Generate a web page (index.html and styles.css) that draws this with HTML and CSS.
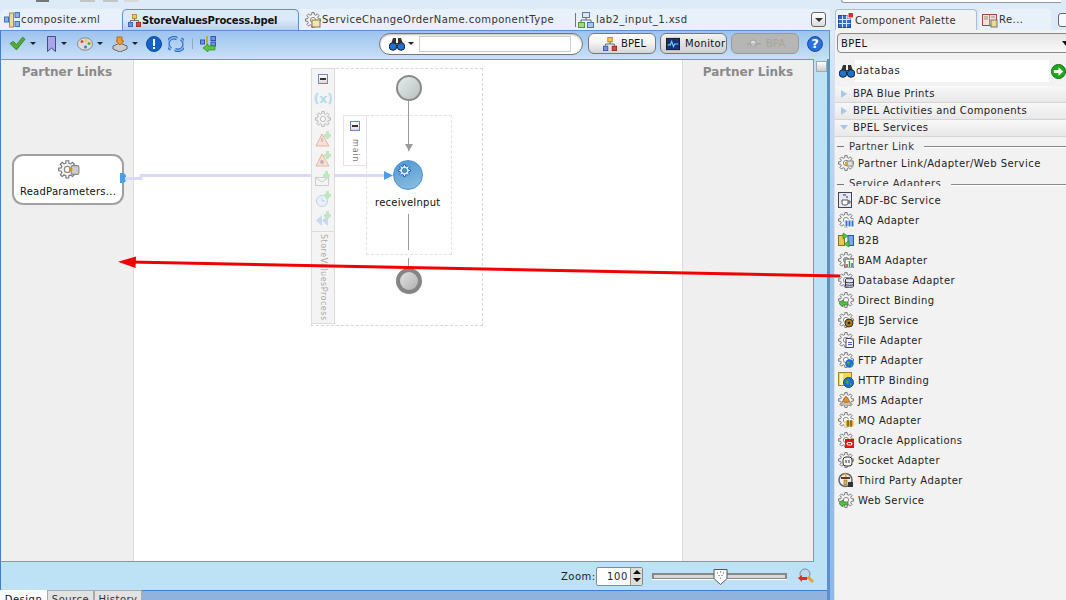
FILE: index.html
```html
<!DOCTYPE html>
<html lang="en">
<head>
<meta charset="utf-8">
<title>StoreValuesProcess.bpel</title>
<link rel="stylesheet" href="styles.css">
</head>
<body>
<svg class="defs" width="0" height="0">
  <defs>
    <symbol id="gear" viewBox="0 0 16 16">
      <path d="M6.67 2.66L6.83.59H9.17L9.33 2.66L10.83 3.29L12.41 1.93L14.07 3.59L12.71 5.17L13.34 6.67L15.41 6.83V9.17L13.34 9.33L12.71 10.83L14.07 12.41L12.41 14.07L10.83 12.71L9.33 13.34L9.17 15.41H6.83L6.67 13.34L5.17 12.71L3.59 14.07L1.93 12.41L3.29 10.83L2.66 9.33L.59 9.17V6.83L2.66 6.67L3.29 5.17L1.93 3.59L3.59 1.93L5.17 3.29Z" fill="#f4f4f4" stroke="#777" stroke-width="1"/>
      <circle cx="8" cy="8" r="2.6" fill="#fff" stroke="#888" stroke-width="1"/>
    </symbol>
    <symbol id="hier" viewBox="0 0 16 16">
      <rect x="5.5" y=".5" width="5" height="5" fill="#f2c84a" stroke="#a8821c"/>
      <path d="M8 5.5V8M3 10V8H13V10" fill="none" stroke="#555"/>
      <rect x=".5" y="10.5" width="5" height="5" fill="#6f95e6" stroke="#3357a8"/>
      <rect x="10.5" y="10.5" width="5" height="5" fill="#d9483b" stroke="#9c2318"/>
    </symbol>
    <symbol id="bino" viewBox="0 0 16 14">
      <path d="M4 1h3v5h2V1h3l2 6H2z" fill="#333"/>
      <circle cx="4" cy="9.5" r="3.8" fill="#1f6fd0" stroke="#222"/>
      <circle cx="12" cy="9.5" r="3.8" fill="#1f6fd0" stroke="#222"/>
    </symbol>
  </defs>
</svg>

<div class="app">
  <main class="editor">
    <div class="strip">
      <i class="nub nub-dark"></i><i class="nub nub-a"></i><i class="nub nub-b"></i><i class="nub nub-c"></i>
    </div>
    <div class="tabs">
      <div class="tab tab-first">
        <svg class="ico" viewBox="0 0 16 16"><rect x=".5" y="5" width="4" height="5" fill="#8ab0e8" stroke="#4672b8"/><rect x="5.5" y="1" width="4" height="14" fill="#e8dca0" stroke="#99904e"/><rect x="11" y=".5" width="4.5" height="5" fill="#8ab0e8" stroke="#4672b8"/><rect x="11" y="9.5" width="4.5" height="5" fill="#8ab0e8" stroke="#4672b8"/></svg>
        <span>composite.xml</span>
      </div>
      <div class="tab tab-active">
        <svg class="ico"><use href="#hier"/></svg>
        <span>StoreValuesProcess.bpel</span>
      </div>
      <div class="tab tab-third">
        <svg class="ico" viewBox="0 0 16 16"><use href="#gear"/><rect x="7" y="8" width="8" height="7" fill="#f0e4b0" stroke="#8a7a40"/></svg>
        <span>ServiceChangeOrderName.componentType</span>
      </div>
      <div class="tab tab-fourth">
        <svg class="ico" viewBox="0 0 16 16"><rect x="4.5" y=".5" width="7" height="5" fill="#dfe8f5" stroke="#5d79a8"/><path d="M8 5.5V8M3 10V8H13V10" fill="none" stroke="#667"/><rect x=".5" y="10.5" width="6" height="5" fill="#9fd88a" stroke="#4a9a3a"/><rect x="9.5" y="10.5" width="6" height="5" fill="#a8c8f0" stroke="#4672b8"/></svg>
        <span>lab2_input_1.xsd</span>
      </div>
      <button class="tab-menu"><i></i></button>
    </div>

    <div class="toolbar">
      <svg class="tool tool-check" viewBox="0 0 16 14"><path d="M1 7l3-2 3 3 6-7 2 2-8 10z" fill="#4eae35" stroke="#2f7a20" stroke-width=".8"/></svg><i class="caret"></i>
      <svg class="tool tool-mark" viewBox="0 0 10 16"><path d="M1 .5h8v15L5 12l-4 3.500z" fill="#a9a6e8" stroke="#4a4790"/></svg><i class="caret"></i>
      <svg class="tool tool-pal" viewBox="0 0 16 14"><ellipse cx="8" cy="7" rx="7.500" ry="6.200" fill="#ddd" stroke="#888"/><circle cx="5" cy="4.500" r="1.500" fill="#d9483b"/><circle cx="9" cy="3.500" r="1.500" fill="#f2c84a"/><circle cx="12" cy="6.500" r="1.500" fill="#4eae35"/><circle cx="8.500" cy="10" r="1.500" fill="#3b78d8"/></svg><i class="caret"></i>
      <svg class="tool tool-box" viewBox="0 0 16 16"><path d="M1 10l7-3 7 3v3l-7 3-7-3z" fill="#ccc" stroke="#666"/><path d="M5 1h5v4h2l-4 4-4-4h1z" fill="#f09a30" stroke="#b86a10"/></svg><i class="caret"></i>
      <svg class="tool tool-info" viewBox="0 0 16 16"><circle cx="8" cy="8" r="7.500" fill="#1462c8" stroke="#0c4a9c"/><rect x="7" y="3" width="2" height="7" fill="#fff"/><rect x="7" y="11" width="2" height="2" fill="#fff"/></svg>
      <svg class="tool tool-sync" viewBox="0 0 16 16"><path d="M3 13A6 6 0 0 1 9 2.500" fill="none" stroke="#2358b0" stroke-width="3.400"/><path d="M3 13A6 6 0 0 1 9 2.500" fill="none" stroke="#7fb0f0" stroke-width="1.800"/><path d="M13 3A6 6 0 0 1 7 13.500" fill="none" stroke="#2358b0" stroke-width="3.400"/><path d="M13 3A6 6 0 0 1 7 13.500" fill="none" stroke="#7fb0f0" stroke-width="1.800"/></svg>
      <i class="tool-sep"></i>
      <svg class="tool tool-flow" viewBox="0 0 16 16"><rect x=".5" y="4" width="4" height="4" fill="#6f95e6" stroke="#3357a8"/><rect x="11" y=".5" width="4.500" height="4" fill="#6f95e6" stroke="#3357a8"/><rect x="11" y="6" width="4.500" height="4" fill="#6f95e6" stroke="#3357a8"/><path d="M7 0v9" stroke="#c9a830" stroke-width="2"/><path d="M3 12l5-4v2h7v4H8v2z" fill="#58c840" stroke="#2f8a20" stroke-width=".7"/></svg>

      <div class="find">
        <svg class="find-ico"><use href="#bino"/></svg><i class="caret caret-find"></i>
        <div class="find-input"></div>
      </div>
      <button class="mode mode-bpel"><svg class="mode-ico"><use href="#hier"/></svg>BPEL</button>
      <button class="mode mode-on"><svg class="mode-ico" viewBox="0 0 16 16"><rect x=".5" y="1.500" width="15" height="13" fill="#14337e" stroke="#111"/><path d="M2 9h3l1.500-4 2 6 1.500-3h4" fill="none" stroke="#7fd0f8" stroke-width="1.300"/></svg>Monitor</button>
      <button class="mode mode-off"><svg class="mode-ico" viewBox="0 0 16 16"><circle cx="7" cy="7" r="3.500" fill="#ddd" stroke="#999"/><path d="M0 8h16" stroke="#999"/></svg>BPA</button>
      <svg class="help" viewBox="0 0 16 16"><circle cx="8" cy="8" r="7.400" fill="#2a70d8" stroke="#14479c"/><text x="8" y="12.300" text-anchor="middle" class="help-q">?</text></svg>
    </div>

    <div class="work">
      <div class="canvas">
        <aside class="partner partner-left"><h2>Partner Links</h2></aside>
        <section class="stage"></section>
        <aside class="partner partner-right"><h2>Partner Links</h2></aside>

        <div class="link-card">
          <svg class="link-gear" viewBox="0 0 20 20"><use href="#gear" width="17" height="17" x="0" y="1"/><rect x="12" y="6" width="7" height="8" rx="1.500" fill="#ccc" stroke="#888"/><rect x="10" y="8" width="3" height="3" fill="#e08a18"/></svg>
          <span>ReadParameters...</span>
        </div>
        <i class="link-port"></i>
        <svg class="wire" width="300" height="12" viewBox="0 0 300 12"><path d="M0 7.500H16V4.500H262" fill="none" stroke="#d9d9fb" stroke-width="3"/><path d="M259 0l9 4.500-9 4.500z" fill="#4b9ee6"/></svg>

        <div class="scope">
          <div class="scope-rail">
            <i class="mini"></i>
            <span class="rail-x">(x)</span>
            <svg class="rail-ico" viewBox="0 0 16 16"><use href="#gear" opacity=".5"/></svg>
            <svg class="rail-ico" viewBox="0 0 16 16"><path d="M7 3L14 15H1z" fill="#f7e0d4" stroke="#e0b8a8"/><path d="M7 7v4" stroke="#c99"/><path d="M11 0h3v3h2v3h-2v2h-3V6H9V3h2z" fill="#bfe8bf"/></svg>
            <svg class="rail-ico" viewBox="0 0 16 16"><path d="M7 3L14 15H1z" fill="#f7e0d4" stroke="#e0b8a8"/><circle cx="7" cy="11" r="2" fill="#c9b0b0"/><path d="M11 0h3v3h2v3h-2v2h-3V6H9V3h2z" fill="#bfe8bf"/></svg>
            <svg class="rail-ico" viewBox="0 0 16 16"><rect x=".5" y="6.500" width="13" height="8" fill="#f4f4f4" stroke="#ccc"/><path d="M1 7l6 4 6-4" fill="none" stroke="#ccc"/><path d="M10 0h3v3h2v3h-2v2h-3V6H8V3h2z" fill="#bfe8bf"/></svg>
            <svg class="rail-ico" viewBox="0 0 16 16"><circle cx="7" cy="10" r="5.500" fill="#e8f0fa" stroke="#bcd2ea"/><path d="M7 7v3h3" fill="none" stroke="#bcd2ea"/><path d="M11 0h3v3h2v3h-2v2h-3V6H9V3h2z" fill="#bfe8bf"/></svg>
            <svg class="rail-ico" viewBox="0 0 16 16"><path d="M7 4v11L1 9.500zM13 4v11L7 9.500z" fill="#c4daf2"/><path d="M11 0h3v3h2v3h-2v2h-3V6H9V3h2z" fill="#bfe8bf"/></svg>
            <span class="rail-name">StoreValuesProcess</span>
          </div>
        </div>

        <div class="seq">
          <div class="seq-tab"><i class="mini"></i><span class="seq-name">main</span></div>
        </div>

        <i class="node-start"></i>
        <i class="flow flow-a"></i>
        <i class="flow-head"></i>
        <div class="node-recv">
          <svg viewBox="0 0 16 16"><path d="M6.67 2.66L6.83.59H9.17L9.33 2.66L10.83 3.29L12.41 1.93L14.07 3.59L12.71 5.17L13.34 6.67L15.41 6.83V9.17L13.34 9.33L12.71 10.83L14.07 12.41L12.41 14.07L10.83 12.71L9.33 13.34L9.17 15.41H6.83L6.67 13.34L5.17 12.71L3.59 14.07L1.93 12.41L3.29 10.83L2.66 9.33L.59 9.17V6.83L2.66 6.67L3.29 5.17L1.93 3.59L3.59 1.93L5.17 3.29Z" fill="#e8f2fa" stroke="#1f62c0" stroke-width="1.200"/><circle cx="8" cy="8" r="2.600" fill="#4e96d0" stroke="#1f62c0"/></svg>
        </div>
        <span class="recv-label">receiveInput</span>
        <i class="flow flow-b"></i>
        <i class="flow flow-c"></i>
        <i class="node-end"></i>
      </div>
      <div class="gutter"><i class="gutter-box"></i></div>
    </div>

    <div class="zoombar">
      <label class="zoom-label">Zoom:</label>
      <div class="spin">
        <span class="spin-val">100</span>
        <div class="spin-btns"><i class="up"></i><i class="down"></i></div>
      </div>
      <div class="slider"><svg class="thumb" viewBox="0 0 15 16"><path d="M1 .5h13v9l-6.500 6-6.500-6z" fill="#fff" stroke="#555"/><path d="M4 4h1M7 3h1M10 4h1M5.500 6.500h1M8.500 6.500h1M7 9h1" stroke="#555"/></svg></div>
      <svg class="zoom-ico" viewBox="0 0 16 16"><circle cx="7" cy="6" r="5" fill="#bcd8f0" stroke="#7a8aa0"/><path d="M10 9l5 5" stroke="#e0a040" stroke-width="3"/><path d="M0 10l4-3v2h5v3H4v2z" fill="#d8301c"/></svg>
    </div>

    <div class="views">
      <span class="view view-on">Design</span>
      <span class="view">Source</span>
      <span class="view">History</span>
      <i class="views-fill"></i>
    </div>
  </main>

  <div class="split"></div>

  <aside class="side">
    <div class="strip strip-side"><i class="strip-box"></i></div>
    <div class="side-tabs">
      <div class="side-tab side-tab-on">
        <svg class="ico" viewBox="0 0 16 16"><rect x=".5" y="3.500" width="12" height="12" fill="#2d6fd0" stroke="#1a4a98"/><path d="M4.500 3.500v12M8.500 3.500v12M.5 7.500h12M.5 11.500h12" stroke="#d8e8fa"/><rect x="10" y=".5" width="5.500" height="5.500" fill="#e02a20" stroke="#fff"/></svg>
        <span>Component Palette</span>
      </div>
      <div class="side-tab side-tab-re">
        <svg class="ico" viewBox="0 0 16 16"><rect x=".5" y="2.500" width="14" height="11" fill="#f0e4dc" stroke="#a04838"/><path d="M7.500 2.500v11M2 5h4M2 7h4M9 5h4" stroke="#a08878"/><rect x="9" y="8" width="6" height="7" fill="#f0d890" stroke="#777"/></svg>
        <span>Re...</span>
      </div>
      <i class="side-min"></i>
    </div>
    <div class="pane">
      <div class="combo">BPEL<i class="combo-caret"></i></div>
      <div class="search">
        <svg class="search-ico"><use href="#bino"/></svg>
        <div class="search-input">databas</div>
        <svg class="go" viewBox="0 0 16 16"><circle cx="8" cy="8" r="7.500" fill="#1ea81e" stroke="#0d6a0d"/><path d="M3 6.500h5V3.500l5 4.500-5 4.500v-3H3z" fill="#fff"/></svg>
      </div>
      <div class="accordion"><i class="tri"></i>BPA Blue Prints</div>
      <div class="accordion"><i class="tri"></i>BPEL Activities and Components</div>
      <div class="accordion"><i class="tri tri-open"></i>BPEL Services</div>
      <div class="group"><i class="dash"></i><span>Partner Link</span><i class="rule"></i></div>
      <div class="row row-plink">
        <svg class="ico" viewBox="0 0 16 16"><use href="#gear"/><rect x="9" y="6" width="6" height="5" fill="#ddd" stroke="#888"/><rect x="7" y="7" width="3" height="3" fill="#e0a040"/></svg>
        <span>Partner Link/Adapter/Web Service</span>
      </div>
      <div class="group group-adapters"><i class="dash"></i><span>Service Adapters</span><i class="rule"></i></div>
      <div class="row"><svg class="ico" viewBox="0 0 16 16"><rect x=".5" y=".5" width="13" height="15" fill="#e4e8f4" stroke="#445"/><path d="M4 8h6v3a2 2 0 0 1-2 2H6a2 2 0 0 1-2-2zM10 9h2v2h-2" fill="#fff" stroke="#555"/><path d="M5 3h3M8 5h2" stroke="#335"/></svg><span>ADF-BC Service</span></div>
      <div class="row"><svg class="ico" viewBox="0 0 16 16"><use href="#gear"/><rect x="7" y="8" width="9" height="7" fill="#2f72d0" stroke="#fff"/><path d="M10 8v7M13 8v7" stroke="#fff"/></svg><span>AQ Adapter</span></div>
      <div class="row"><svg class="ico" viewBox="0 0 16 16"><rect x=".5" y="3.500" width="6" height="10" fill="#e8c850" stroke="#8a7020"/><rect x="10" y="3.500" width="5.500" height="10" fill="#78a8e8" stroke="#305898"/><path d="M5 1l5 3-5 3zM11 9l-5 3 5 3z" fill="#50c840" stroke="#2a8020" stroke-width=".6"/></svg><span>B2B</span></div>
      <div class="row"><svg class="ico" viewBox="0 0 16 16"><use href="#gear"/><rect x="7" y="7" width="9" height="9" fill="#fff" stroke="#555"/><path d="M9 15v-3" stroke="#d83020" stroke-width="1.500"/><path d="M11.500 15V9" stroke="#3a9a30" stroke-width="1.500"/><path d="M14 15v-4" stroke="#2f60c0" stroke-width="1.500"/></svg><span>BAM Adapter</span></div>
      <div class="row"><svg class="ico" viewBox="0 0 16 16"><use href="#gear"/><ellipse cx="11.500" cy="7.500" rx="4" ry="1.500" fill="#8a9fd0" stroke="#334"/><path d="M7.500 7.500v7c0 1 8 1 8 0v-7" fill="#dfe6f5" stroke="#334"/><path d="M7.500 10c1 1 7 1 8 0M7.500 12.500c1 1 7 1 8 0" fill="none" stroke="#334"/></svg><span>Database Adapter</span></div>
      <div class="row"><svg class="ico" viewBox="0 0 16 16"><use href="#gear"/><path d="M1 11l4-3v2h5v3H5v2z" fill="#50c840" stroke="#2a8020" stroke-width=".7"/></svg><span>Direct Binding</span></div>
      <div class="row"><svg class="ico" viewBox="0 0 16 16"><use href="#gear"/><circle cx="11" cy="11" r="4" fill="#b07a10" stroke="#333"/><circle cx="11" cy="11" r="1.300" fill="#222"/></svg><span>EJB Service</span></div>
      <div class="row"><svg class="ico" viewBox="0 0 16 16"><use href="#gear"/><path d="M8 6.500h5l2.500 2.500v6.500H8z" fill="#fff" stroke="#446"/><path d="M10 10.500h4M10 12.500h4" stroke="#3a6ac0"/></svg><span>File Adapter</span></div>
      <div class="row"><svg class="ico" viewBox="0 0 16 16"><use href="#gear"/><circle cx="11.500" cy="11.500" r="4.300" fill="#1f6fd0"/><path d="M9 9l3 1-1 3-2-1zM13 12l2 1-2 2z" fill="#4aa83a"/></svg><span>FTP Adapter</span></div>
      <div class="row"><svg class="ico" viewBox="0 0 16 16"><rect x=".5" y=".5" width="13" height="13" fill="#f6d850" stroke="#a08820"/><rect x="2" y="2" width="3" height="11" fill="#fff6c0"/><circle cx="10.500" cy="10.500" r="5" fill="#1f6fd0" stroke="#0c4890"/><path d="M8 8l3 1-1 3-2-1zM12 11l2 1-2 2z" fill="#4aa83a"/></svg><span>HTTP Binding</span></div>
      <div class="row"><svg class="ico" viewBox="0 0 16 16"><use href="#gear"/><path d="M8 4l4 6H4z" fill="#e8902a" stroke="#a85010" stroke-width=".6"/><path d="M3 11h10v2H3z" fill="#f0e8d8" stroke="#998"/></svg><span>JMS Adapter</span></div>
      <div class="row"><svg class="ico" viewBox="0 0 16 16"><use href="#gear"/><rect x="7" y="8" width="9" height="7" fill="#e8b020" stroke="#fff"/><path d="M10 8v7M13 8v7" stroke="#333"/></svg><span>MQ Adapter</span></div>
      <div class="row"><svg class="ico" viewBox="0 0 16 16"><use href="#gear"/><rect x="7" y="7" width="9" height="9" fill="#e81010"/><rect x="8.500" y="10" width="6" height="3.500" rx="1.700" fill="#fff"/><rect x="10" y="11" width="3" height="1.500" fill="#e81010"/></svg><span>Oracle Applications</span></div>
      <div class="row"><svg class="ico" viewBox="0 0 16 16"><use href="#gear"/><rect x="5" y="5" width="9" height="9" rx="3" fill="#f8f8f8" stroke="#333"/><path d="M8 8v3M11 8v3" stroke="#333"/></svg><span>Socket Adapter</span></div>
      <div class="row"><svg class="ico" viewBox="0 0 16 16"><circle cx="7.500" cy="8" r="6.500" fill="#eee" stroke="#666" stroke-width="1.500"/><path d="M3 5h9v2H3z" fill="#5a3a20"/><path d="M7 1l1 4" stroke="#e8a030" stroke-width="1.500"/><rect x="10" y="10" width="5" height="5" fill="#333"/><rect x="6" y="8" width="3" height="5" fill="#e0b030" stroke="#555" stroke-width=".5"/></svg><span>Third Party Adapter</span></div>
      <div class="row"><svg class="ico" viewBox="0 0 16 16"><use href="#gear"/><path d="M1 11l4-3v2h5v3H5v2z" fill="#50c840" stroke="#2a8020" stroke-width=".7"/></svg><span>Web Service</span></div>
    </div>
  </aside>
</div>

<svg class="annot" width="730" height="30" viewBox="0 0 730 30"><path d="M12 7L722 21" stroke="#f00000" stroke-width="3"/><path d="M0 6.800L18 1.500L17.500 13z" fill="#f00000"/></svg>
</body>
</html>
```
FILE: styles.css
```css
* { box-sizing: border-box; }
html, body { margin: 0; height: 100%; overflow: hidden; }
body {
  position: relative;
  width: 1066px;
  height: 600px;
  background: #dcebf7;
  font-family: "DejaVu Sans", sans-serif;
  font-size: 10px;
  color: #222;
}
i { display: block; font-style: normal; }
button { font: inherit; padding: 0; }
.defs { position: absolute; }
.app { display: flex; height: 600px; }

/* Editor column */
.editor { width: 830px; flex: none; display: flex; flex-direction: column; }
.strip { height: 9px; display: flex; align-items: flex-start; background: #dcebf7; flex: none; }
.nub { height: 2px; }
.nub-dark { width: 13px; margin-left: 36px; background: #777; }
.nub-a { width: 15px; margin-left: 31px; background: #c4c4c4; }
.nub-b { width: 15px; margin-left: 8px; background: #c4c4c4; }
.nub-c { width: 15px; margin-left: 6px; background: #dadada; }

.tabs { height: 21px; display: flex; align-items: flex-end; background: #dcebf7; flex: none; }
.tab { display: flex; align-items: center; height: 21px; letter-spacing: .45px; color: #333; white-space: nowrap; }
.ico { width: 16px; height: 16px; flex: none; }
.tab-first { width: 122px; padding-left: 4px; gap: 1px; background: #e8f1fa; border-top-left-radius: 6px; }
.tab-active {
  width: 177px;
  padding-left: 5px;
  gap: 1px;
  font-weight: 700;
  letter-spacing: -.2px;
  color: #111;
  background: linear-gradient(#dce9f8 0, #dce9f8 50%, #b6d0f0 100%);
  border: 1px solid #5b90d8;
  border-bottom: 0;
  border-radius: 5px 5px 0 0;
}
.tab-active .ico { width: 13px; height: 13px; }
.tab-third { width: 276px; padding-left: 6px; gap: 1px; background: #e8f1fa; }
.tab-fourth { flex: 1; gap: 2px; background: #e8f1fa; }
.tab-fourth::before { content: ""; width: 1px; height: 14px; background: #777; }
.tab-menu {
  width: 15px; height: 15px; margin: 0 4px 3px -19px;
  background: linear-gradient(#fff, #ddd); border: 1px solid #666; border-radius: 3px;
  display: flex; align-items: center; justify-content: center; position: relative;
}
.tab-menu i { width: 0; height: 0; border: 4px solid transparent; border-top: 4px solid #333; border-bottom: 0; }

.toolbar {
  height: 29px; flex: none; display: flex; align-items: center;
  background: linear-gradient(#9cc3ee, #c8e0f6);
  border-left: 1px solid #3f7fd0; border-right: 1px solid #5b90d8; border-top: 1px solid #5b90d8;
  padding: 0 0 3px 8px;
}
.tool { flex: none; }
.tool-check { width: 17px; height: 15px; }
.tool-mark { width: 11px; height: 16px; margin-left: 10px; }
.tool-pal { width: 16px; height: 14px; margin-left: 10px; }
.tool-box { width: 16px; height: 16px; margin-left: 9px; }
.tool-info { width: 16px; height: 16px; margin-left: 8px; }
.tool-sync { width: 16px; height: 16px; margin-left: 6px; }
.tool-sep { width: 1px; height: 11px; background: #8fa8c4; margin-left: 8px; }
.tool-flow { width: 16px; height: 16px; margin-left: 7px; }
.caret { width: 0; height: 0; margin-left: 4px; border: 3px solid transparent; border-top: 3px solid #222; border-bottom: 0; flex: none; }
.find {
  width: 204px; height: 22px; margin-left: 163px; flex: none;
  display: flex; align-items: center; padding-left: 9px;
  background: #fff; border: 1px solid #777; border-radius: 11px; box-shadow: inset 0 1px 2px #bbb;
}
.find-ico { width: 16px; height: 14px; }
.caret-find { margin-left: 3px; }
.find-input { width: 152px; height: 16px; margin-left: 5px; border: 1px solid #ccc; background: #fff; }
.mode {
  height: 21px; flex: none; display: flex; align-items: center; margin-left: 4px;
  letter-spacing: .1px; color: #111;
  background: linear-gradient(#fff 0, #f2f2f2 50%, #d4d4d4 100%);
  border: 1px solid #777; border-radius: 6px;
}
.mode-ico { width: 14px; height: 14px; flex: none; }
.mode-bpel { margin-left: 5px; width: 68px; padding-left: 14px; gap: 4px; }
.mode-on { width: 67px; padding-left: 4px; gap: 4px; letter-spacing: .35px; background: linear-gradient(#f2f2f2, #cfcfcf); }
.mode-on .mode-ico { width: 16px; height: 14px; }
.mode-off { width: 68px; padding-left: 15px; gap: 5px; color: #a6a690; background: #b6b6b6; border-color: #999; }
.help { width: 16px; height: 16px; margin-left: 8px; flex: none; }
.help-q { font: 700 13px "DejaVu Sans", sans-serif; fill: #fff; }

.work { height: 503px; flex: none; display: flex; background: #bde2f6; }
.canvas {
  position: relative; width: 814px; flex: none; display: flex;
  border: 1px solid #2db8e6; border-left-color: #3f7fd0; background: #fff;
}
.partner { width: 133px; flex: none; background: #efefef; text-align: center; }
.partner-left { border-right: 1px solid #dcdcdc; }
.partner-right { width: 131px; border-left: 1px solid #dcdcdc; }
.partner h2 { margin: 4px 0 0; font-size: 12px; line-height: 16px; font-weight: 700; color: #8a8a8a; }
.stage { flex: 1; background: #fff; }
.gutter { flex: 1; padding: 2px 0 0 2px; border-right: 3px solid #5b8fd0; }
.gutter-box { width: 11px; height: 11px; border: 1px solid #9ab; background: linear-gradient(#fff, #ccc); }

/* Diagram nodes, placed on the canvas */
.link-card {
  position: absolute; left: 11px; top: 94px; width: 112px; height: 51px;
  border: 2px solid #a0a0a0; border-radius: 11px; background: #fff;
  display: flex; flex-direction: column; align-items: center; padding-top: 3px;
  letter-spacing: .25px; color: #111;
}
.link-gear { width: 22px; height: 22px; margin-bottom: 5px; margin-left: 2px; }
.link-port { position: absolute; left: 119px; top: 113px; width: 6px; height: 10px; background: #4b9ee6; border-radius: 0 4px 4px 0; }
.wire { position: absolute; left: 124px; top: 111px; }
.scope { position: absolute; left: 310px; top: 8px; width: 172px; height: 258px; border: 1px dashed #d8d8d8; }
.scope-rail {
  width: 24px; height: 100%; margin: -1px 0 0 -1px; padding-top: 5px;
  background: #f4f4f4; border: 1px solid #dcdcdc;
  display: flex; flex-direction: column; align-items: center; gap: 4px;
}
.mini { width: 10px; height: 10px; flex: none; border: 1px solid #6a8ab0; background: linear-gradient(#fff, #ddd); position: relative; }
.mini::after { content: ""; position: absolute; left: 1px; right: 1px; top: 3px; height: 2px; background: #333; }
.rail-x { font-size: 13px; font-weight: 700; line-height: 16px; color: #b6dcec; margin-top: 3px; letter-spacing: -.5px; }
.rail-ico { width: 16px; height: 16px; flex: none; }
.rail-name {
  margin-top: 0; padding-top: 2px; width: 100%; flex: 1; border-top: 1px solid #dcdcdc;
  writing-mode: vertical-rl; display: flex; align-items: center;
  font-size: 8px; letter-spacing: .5px; color: #aaa; line-height: 22px;
}
.seq { position: absolute; left: 342px; top: 55px; width: 109px; height: 140px; }
.seq::after { content: ""; position: absolute; left: 23px; top: 0; right: 0; bottom: 0; border: 1px dashed #e2e2e2; }
.seq-tab {
  width: 24px; height: 51px; border: 1px solid #e4e4e4; background: #fff;
  display: flex; flex-direction: column; align-items: center; padding-top: 5px;
}
.seq-name { writing-mode: vertical-rl; font-size: 8px; letter-spacing: .9px; color: #777; margin-top: 8px; }
.node-start, .node-end { position: absolute; border-radius: 50%; }
.node-start { left: 395px; top: 15px; width: 26px; height: 26px; border: 2px solid #8a8a8a; background: linear-gradient(135deg, #e6ecec, #b8c0c0); }
.node-end { left: 395px; top: 208px; width: 26px; height: 26px; border: 4px solid #858585; background: linear-gradient(135deg, #e2e2e2, #b0b0b0); }
.flow { position: absolute; left: 407px; width: 1px; background: #9a9a9a; }
.flow-a { top: 41px; height: 50px; }
.flow-b { top: 154px; height: 36px; }
.flow-c { top: 198px; height: 10px; }
.flow-head { position: absolute; left: 404px; top: 84px; width: 0; height: 0; border: 4px solid transparent; border-top: 7px solid #9a9a9a; border-bottom: 0; }
.node-recv {
  position: absolute; left: 392px; top: 100px; width: 30px; height: 30px; border-radius: 50%;
  border: 1px solid #4a90d8; background: linear-gradient(160deg, #4e96d0, #8ec0e0); padding: 3px 0 0 4px;
}
.node-recv svg { width: 13px; height: 13px; display: block; }
.recv-label { position: absolute; left: 374px; top: 136px; letter-spacing: .25px; color: #111; line-height: 14px; }

.zoombar {
  height: 28px; flex: none; display: flex; align-items: center; padding-left: 560px;
  background: #bde2f6; border-left: 1px solid #3f7fd0; border-right: 3px solid #5b8fd0;
}
.zoom-label { letter-spacing: .5px; color: #222; width: 35px; }
.spin { display: flex; width: 47px; height: 19px; border: 1px solid #888; background: #fff; border-radius: 2px; }
.spin-val { flex: 1; text-align: right; padding-right: 2px; line-height: 17px; letter-spacing: .6px; color: #222; }
.spin-btns { width: 12px; display: flex; flex-direction: column; background: #ddd; border-left: 1px solid #999; align-items: center; justify-content: space-around; }
.up { width: 0; height: 0; border: 4px solid transparent; border-bottom: 4px solid #111; border-top: 0; }
.down { width: 0; height: 0; border: 4px solid transparent; border-top: 4px solid #111; border-bottom: 0; }
.slider { position: relative; width: 135px; height: 6px; margin-left: 9px; border: 1px solid #888; border-width: 2px 2px 1px; background: #d8d8d8; box-shadow: 0 1px 0 #fff; }
.thumb { position: absolute; left: 59px; top: -6px; width: 15px; height: 16px; }
.zoom-ico { width: 16px; height: 16px; margin-left: 11px; flex: none; }

.views { height: 9px; flex: 1; display: flex; overflow: hidden; background: #bde2f6; border-right: 3px solid #5b8fd0; }
.view { width: 47px; height: 18px; line-height: 13px; padding-top: 2px; text-align: center; background: #e2e2e2; border: 1px solid #aaa; border-bottom: 0; letter-spacing: .5px; color: #333; }
.view:nth-child(3) { width: 48px; }
.view-on { background: #fff; border: 0; padding-top: 3px; color: #111; }
.views-fill { flex: 1; background: #8fb3dd; border-top: 1px solid #3f7fd0; }

.split { width: 4px; flex: none; background: linear-gradient(#dcebf7 5%, #a8c8ea 40%, #8fb8e6); }

/* Palette */
.side { width: 232px; flex: none; display: flex; flex-direction: column; overflow: hidden; }
.strip-side { width: 232px; }
.strip-box { width: 220px; height: 3px; margin-left: 7px; border: 1px solid #999; border-top: 0; border-right: 0; border-radius: 0 0 0 4px; background: #fff; }
.side-tabs { height: 21px; display: flex; align-items: stretch; flex: none; }
.side-tab { display: flex; flex: none; align-items: center; gap: 1px; letter-spacing: .45px; color: #333; border-radius: 4px 4px 0 0; }
.side-tab-re { width: 72px; padding-left: 3px; background: #e8f1fa; margin-left: 2px; }
.side-tab-on { width: 142px; padding-left: 2px; letter-spacing: .3px; background: #f2f2f2; border: 1px solid #a8bcd4; border-bottom: 0; margin-left: 1px; }
.side-min { flex: none; width: 14px; height: 14px; margin: 4px 0 0 7px; border: 1px solid #666; border-radius: 3px; background: #f4f8fc; }
.pane { flex: 1; background: #f2f2f2; padding-top: 3px; border-left: 1px solid #dde; }
.combo {
  width: 240px; height: 20px; margin-left: 2px; padding-left: 3px; line-height: 20px;
  border: 1px solid #888; border-radius: 4px; background: linear-gradient(#e6e6e6, #f8f8f8);
  position: relative; color: #111; letter-spacing: .4px;
}
.combo-caret { position: absolute; left: 224px; top: 7px; width: 0; height: 0; border: 4px solid transparent; border-top: 5px solid #111; border-bottom: 0; }
.search { display: flex; align-items: center; height: 22px; margin: 7px 0 4px; padding-left: 4px; }
.search-ico { width: 16px; height: 14px; flex: none; }
.search-input { width: 194px; height: 22px; line-height: 22px; background: #fff; padding-left: 1px; letter-spacing: .6px; color: #222; }
.go { width: 15px; height: 15px; margin-left: 2px; flex: none; }
.accordion {
  height: 17px; line-height: 16px; display: flex; align-items: center; letter-spacing: .4px; color: #222;
  background: linear-gradient(#f8f8f8, #e8e8e8); border-bottom: 1px solid #d4d4d4; padding-left: 5px;
}
.tri { width: 0; height: 0; margin-right: 6px; border: 4px solid transparent; border-left: 6px solid #a8c8ea; border-right: 0; flex: none; margin-left: 1px; }
.tri-open { border: 4px solid transparent; border-top: 5px solid #a8c8ea; border-bottom: 0; margin-left: 0; margin-right: 5px; margin-top: -1px; }
.group { display: flex; align-items: center; height: 15px; padding-top: 1px; letter-spacing: .45px; color: #333; margin-top: 1px; }
.group-adapters { height: 10px; margin: 0 0 4px; padding-top: 6px; line-height: 12px; overflow: hidden; }
.dash { width: 7px; height: 1px; margin: 0 5px 0 2px; background: #777; flex: none; }
.rule { flex: 1; height: 1px; margin-left: 10px; background: #888; box-shadow: 0 1px 0 #fff; }
.row { height: 20px; display: flex; align-items: center; padding-left: 3px; gap: 4px; letter-spacing: .4px; color: #222; white-space: nowrap; }
.row-plink { margin-bottom: 3px; letter-spacing: .45px; }

/* Annotation lying over everything */
.annot { position: absolute; left: 118px; top: 255px; }
```
